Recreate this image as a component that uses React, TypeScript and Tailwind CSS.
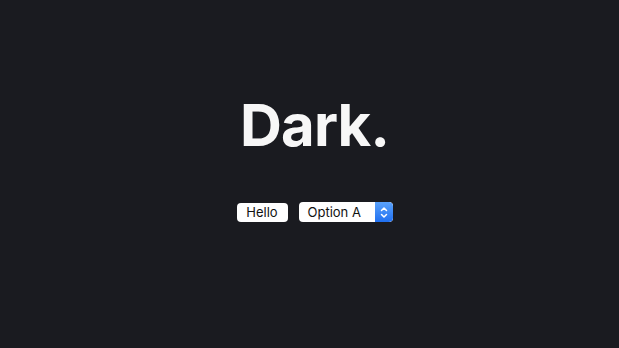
import React from "react";

export default function App() {
  return (
    <div className="w-[619px] h-[348px] bg-[#1a1b20] flex flex-col items-center pl-[10px] pt-[85px]" style={{ fontFamily: "Inter, 'Helvetica Neue', Arial, sans-serif" }}>
      <h1 className="text-[58px] leading-[80px] font-bold text-[#f7f7f7] tracking-[-0.8px]">Dark.</h1>
      <div className="mt-[37px] flex items-center gap-[11px]">
        <button className="h-[19px] w-[51px] rounded-[4px] bg-white text-[13px] leading-[19px] text-[#111] flex items-center justify-center">
          Hello
        </button>
        <div className="h-[20px] w-[94px] rounded-[4px] bg-white flex items-stretch overflow-hidden">
          <span className="flex-1 text-[13px] leading-[20px] text-[#111] pl-[9px]">Option A</span>
          <span className="w-[18px] bg-gradient-to-b from-[#5aa2fb] to-[#1f6ff0] flex items-center justify-center rounded-r-[4px]">
            <svg width="8" height="13" viewBox="0 0 8 13" fill="none" stroke="white" strokeWidth="1.5" strokeLinecap="round" strokeLinejoin="round">
              <path d="M1.5 4.5 L4 2 L6.5 4.5" />
              <path d="M1.5 8.5 L4 11 L6.5 8.5" />
            </svg>
          </span>
        </div>
      </div>
    </div>
  );
}
